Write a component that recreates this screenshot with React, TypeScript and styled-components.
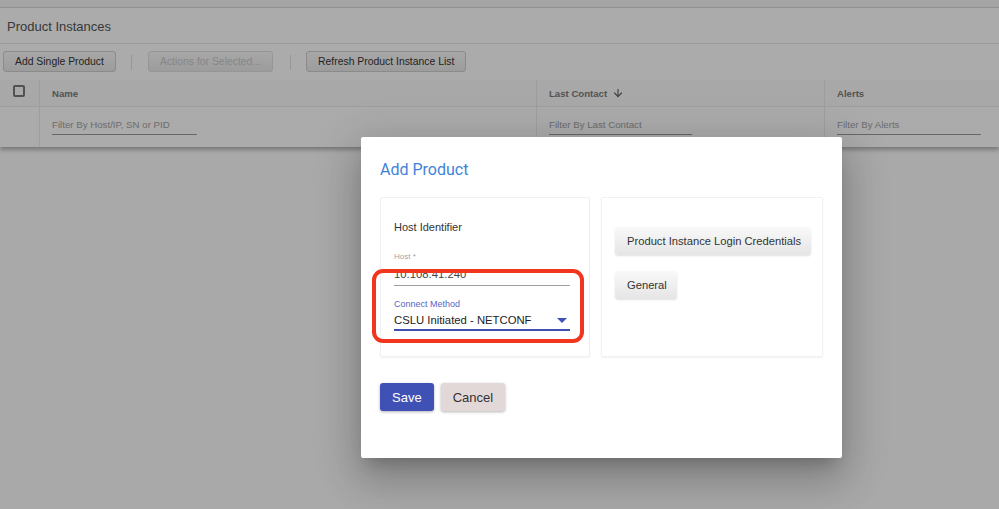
import React from "react";
import styled, { createGlobalStyle } from "styled-components";
import { ArrowDown } from "lucide-react";

const Global = createGlobalStyle`
  html, body { margin: 0; padding: 0; }
  body { font-family: "Liberation Sans", Arial, sans-serif; background: #fcfcfc; }
  * { box-sizing: border-box; }
`;

const Page = styled.div`
  position: relative;
  width: 999px;
  height: 509px;
  overflow: hidden;
  background: #fcfcfc;
`;

const TopStripe = styled.div`
  height: 8px;
  background: #f6f6f6;
  border-bottom: 1px solid #dcdcdc;
`;

const Panel = styled.section`
  background: #fff;
  box-shadow: 0 3px 4px rgba(0, 0, 0, 0.28);
`;

const TitleBar = styled.div`
  height: 36px;
  display: flex;
  align-items: center;
  padding: 1px 0 0 7px;
  font-size: 13px;
  color: #555;
  border-bottom: 1px solid #e6e6e6;
`;

const Toolbar = styled.div`
  height: 36px;
  display: flex;
  align-items: flex-start;
  padding: 7px 0 0 3px;
`;

const ToolButton = styled.button<{ $disabled?: boolean }>`
  height: 21px;
  padding: 0 11px;
  font-family: "Liberation Sans", Arial, sans-serif;
  font-size: 10.4px;
  white-space: nowrap;
  color: ${(p) => (p.$disabled ? "#c8c8c8" : "#343434")};
  background: linear-gradient(#fafafa, #e9e9e9);
  border: 1px solid ${(p) => (p.$disabled ? "#e0e0e0" : "#cfcfcf")};
  border-radius: 3px;
`;

const Sep = styled.span<{ $l: number; $r: number }>`
  width: 1px;
  height: 15px;
  margin: 4px ${(p) => p.$r}px 0 ${(p) => p.$l}px;
  background: #e0e0e0;
`;

const Table = styled.div`
  display: grid;
  grid-template-columns: 39px 497px 288px 1fr;
`;

const HeadCell = styled.div<{ $first?: boolean }>`
  height: 27px;
  display: flex;
  align-items: center;
  gap: 5px;
  padding-left: ${(p) => (p.$first ? "13px" : "12px")};
  background: #fbfbfb;
  border-bottom: 1px solid #ececec;
  border-left: ${(p) => (p.$first ? "none" : "1px solid #ececec")};
  font-size: 9.6px;
  font-weight: 700;
  color: #7c7c7c;
`;

const FilterCell = styled.div<{ $first?: boolean }>`
  height: 40px;
  padding: 12px 0 0 12px;
  border-left: ${(p) => (p.$first ? "none" : "1px solid #ececec")};
`;

const Check = styled.span`
  width: 12px;
  height: 12px;
  margin-top: -5px;
  border: 2px solid #7a7a7a;
  border-radius: 2px;
`;

const FilterInput = styled.div<{ $w: number }>`
  width: ${(p) => p.$w}px;
  height: 16px;
  font-size: 9.7px;
  line-height: 12px;
  color: #a2a2a2;
  border-bottom: 1px solid #9a9a9a;
`;

const Scrim = styled.div`
  position: absolute;
  inset: 0;
  background: rgba(0, 0, 0, 0.33);
`;

const Dialog = styled.div`
  position: absolute;
  left: 361px;
  top: 137px;
  width: 481px;
  height: 321px;
  background: #fff;
  border-radius: 2px;
  padding: 23px 19px 0 19px;
  box-shadow: 0 11px 15px -7px rgba(0, 0, 0, 0.2),
    0 24px 38px 3px rgba(0, 0, 0, 0.14), 0 9px 46px 8px rgba(0, 0, 0, 0.12);
`;

const DialogTitle = styled.h2`
  margin: 0;
  height: 20px;
  line-height: 20px;
  font-family: Roboto, "Liberation Sans", sans-serif;
  font-weight: 400;
  font-size: 16px;
  color: #3f83d8;
`;

const Cards = styled.div`
  margin-top: 17px;
  display: grid;
  grid-template-columns: 210px 222px;
  gap: 11px;
`;

const Card = styled.div<{ $pad: number }>`
  position: relative;
  height: 160px;
  padding: ${(p) => p.$pad}px 13px 0 13px;
  border: 1px solid #f1f1f1;
  box-shadow: 0 1px 2px rgba(0, 0, 0, 0.05);
  border-radius: 2px;
`;

const SectionLabel = styled.div`
  height: 14px;
  line-height: 14px;
  font-size: 11px;
  color: #333;
`;

const Field = styled.div<{ $mt: number; $focused?: boolean }>`
  margin-top: ${(p) => p.$mt}px;
  width: 176px;
  border-bottom: ${(p) => (p.$focused ? "2px solid #3f51b5" : "1px solid #9e9e9e")};
  padding-bottom: ${(p) => (p.$focused ? "1px" : "3px")};
`;

const FieldLabel = styled.div<{ $focused?: boolean }>`
  height: ${(p) => (p.$focused ? "11px" : "10px")};
  line-height: ${(p) => (p.$focused ? "11px" : "10px")};
  font-size: ${(p) => (p.$focused ? "9px" : "8px")};
  color: ${(p) => (p.$focused ? "#5a67c4" : "#a5a5a5")};
`;

const FieldValue = styled.div<{ $mt: number; $muted?: boolean }>`
  margin-top: ${(p) => p.$mt}px;
  height: 15px;
  line-height: 15px;
  font-size: 11.3px;
  color: ${(p) => (p.$muted ? "#444" : "#222")};
  display: flex;
  justify-content: space-between;
  align-items: center;
`;

const Caret = styled.span`
  width: 0;
  height: 0;
  margin-right: 3px;
  border-left: 5px solid transparent;
  border-right: 5px solid transparent;
  border-top: 5px solid #3f51b5;
`;

const Highlight = styled.div`
  position: absolute;
  left: -9px;
  top: 71px;
  width: 212px;
  height: 74px;
  border: 4px solid #f2361d;
  border-radius: 11px;
  pointer-events: none;
`;

const SideButtons = styled.div`
  display: flex;
  flex-direction: column;
  align-items: flex-start;
  gap: 16px;
`;

const GrayButton = styled.button`
  height: 28px;
  padding: 0 10px 0 12px;
  font-family: "Liberation Sans", Arial, sans-serif;
  font-size: 11.2px;
  white-space: nowrap;
  color: #333;
  background: linear-gradient(#f9f9f9, #e5e5e5);
  border: none;
  border-radius: 3px;
  box-shadow: 0 1px 2px rgba(0, 0, 0, 0.12);
`;

const Actions = styled.div`
  margin-top: 26px;
  display: flex;
  gap: 7px;
`;

const ActionButton = styled.button<{ $primary?: boolean }>`
  height: 28px;
  padding: 0 12px;
  font-family: "Liberation Sans", Arial, sans-serif;
  font-size: 13px;
  color: ${(p) => (p.$primary ? "#fff" : "#333")};
  background: ${(p) => (p.$primary ? "#3f51b5" : "#e2d8d8")};
  border: none;
  border-radius: 3px;
  box-shadow: 0 1px 3px rgba(0, 0, 0, 0.3);
`;

export default function App() {
  return (
    <Page>
      <Global />
      <TopStripe />
      <Panel>
        <TitleBar>Product Instances</TitleBar>
        <Toolbar>
          <ToolButton>Add Single Product</ToolButton>
          <Sep $l={15} $r={16} />
          <ToolButton $disabled>Actions for Selected...</ToolButton>
          <Sep $l={17} $r={15} />
          <ToolButton>Refresh Product Instance List</ToolButton>
        </Toolbar>
        <Table>
          <HeadCell $first>
            <Check />
          </HeadCell>
          <HeadCell>Name</HeadCell>
          <HeadCell>
            Last Contact <ArrowDown size={12} strokeWidth={2.5} color="#6a6a6a" />
          </HeadCell>
          <HeadCell>Alerts</HeadCell>
          <FilterCell $first />
          <FilterCell>
            <FilterInput $w={145}>Filter By Host/IP, SN or PID</FilterInput>
          </FilterCell>
          <FilterCell>
            <FilterInput $w={143}>Filter By Last Contact</FilterInput>
          </FilterCell>
          <FilterCell>
            <FilterInput $w={144}>Filter By Alerts</FilterInput>
          </FilterCell>
        </Table>
      </Panel>
      <Scrim />
      <Dialog>
        <DialogTitle>Add Product</DialogTitle>
        <Cards>
          <Card $pad={22}>
            <SectionLabel>Host Identifier</SectionLabel>
            <Field $mt={18}>
              <FieldLabel>Host *</FieldLabel>
              <FieldValue $mt={5} $muted>10.108.41.240</FieldValue>
            </Field>
            <Field $mt={13} $focused>
              <FieldLabel $focused>Connect Method</FieldLabel>
              <FieldValue $mt={3}>
                CSLU Initiated - NETCONF
                <Caret />
              </FieldValue>
            </Field>
            <Highlight />
          </Card>
          <Card $pad={29}>
            <SideButtons>
              <GrayButton>Product Instance Login Credentials</GrayButton>
              <GrayButton>General</GrayButton>
            </SideButtons>
          </Card>
        </Cards>
        <Actions>
          <ActionButton $primary>Save</ActionButton>
          <ActionButton>Cancel</ActionButton>
        </Actions>
      </Dialog>
    </Page>
  );
}
